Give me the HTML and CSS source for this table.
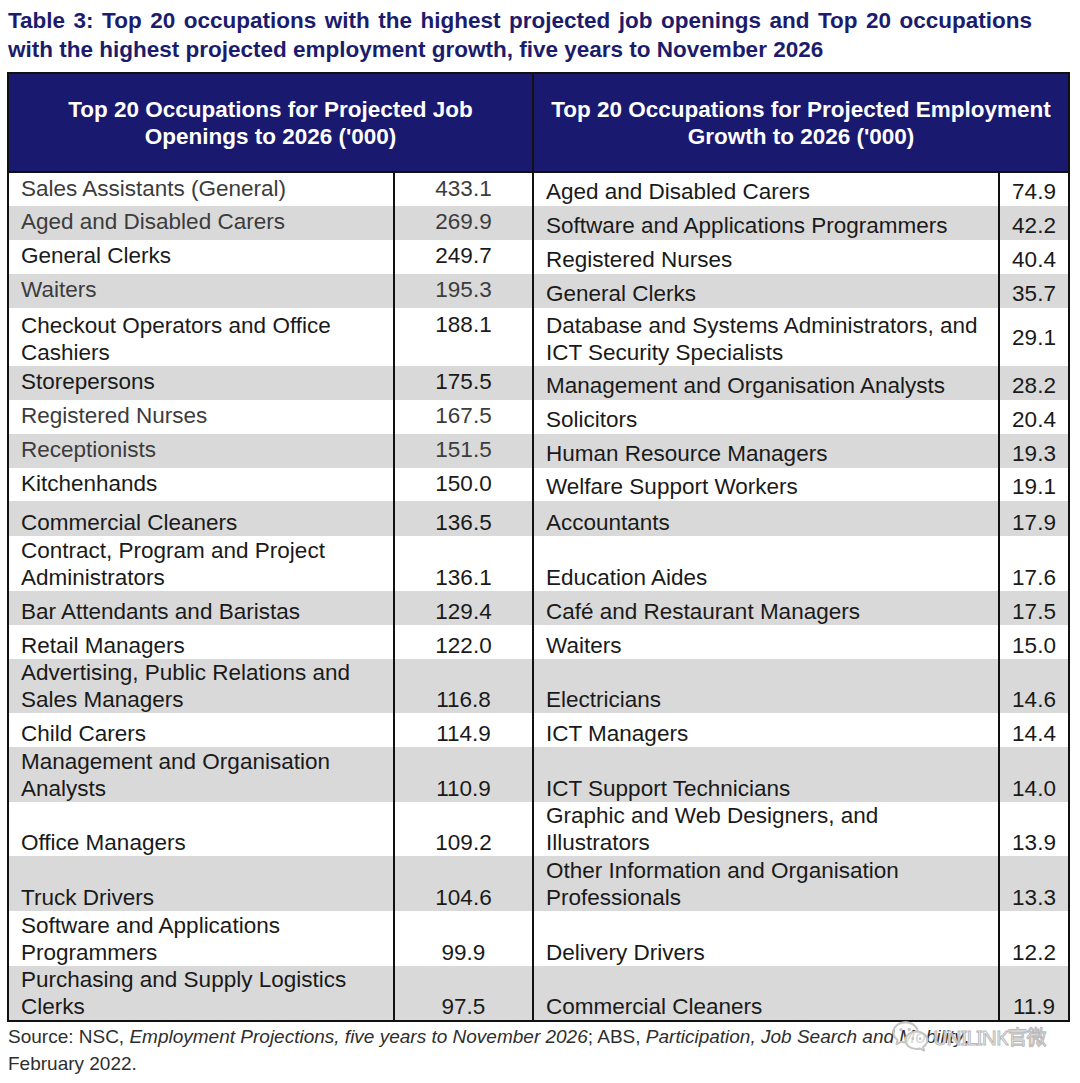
FILE: index.html
```html
<!DOCTYPE html>
<html lang="en">
<head>
<meta charset="utf-8">
<title>Table 3</title>
<link rel="stylesheet" href="styles.css">
</head>
<body>
<div class="page">
  <h1 class="title">Table 3: Top 20 occupations with the highest projected job openings and Top 20 occupations with the highest projected employment growth, five years to November 2026</h1>
  <table class="occ">
    <colgroup>
      <col class="c1"><col class="c2"><col class="c3"><col class="c4">
    </colgroup>
    <thead>
      <tr class="head">
        <th colspan="2">Top 20 Occupations for Projected Job<br>Openings to 2026 ('000)</th>
        <th colspan="2">Top 20 Occupations for Projected Employment<br>Growth to 2026 ('000)</th>
      </tr>
    </thead>
    <tbody>
      <tr class="r34 mid-l"><td class="dim">Sales Assistants (General)</td><td class="v dim">433.1</td><td>Aged and Disabled Carers</td><td class="v">74.9</td></tr>
      <tr class="r34 alt mid-l"><td class="dim">Aged and Disabled Carers</td><td class="v dim">269.9</td><td>Software and Applications Programmers</td><td class="v">42.2</td></tr>
      <tr class="r34 mid-l"><td>General Clerks</td><td class="v">249.7</td><td>Registered Nurses</td><td class="v">40.4</td></tr>
      <tr class="r34 alt mid-l"><td class="dim">Waiters</td><td class="v dim">195.3</td><td>General Clerks</td><td class="v">35.7</td></tr>
      <tr class="r58"><td>Checkout Operators and Office Cashiers</td><td class="v top">188.1</td><td>Database and Systems Administrators, and ICT Security Specialists</td><td class="v middle">29.1</td></tr>
      <tr class="r34 alt mid-l"><td>Storepersons</td><td class="v">175.5</td><td>Management and Organisation Analysts</td><td class="v">28.2</td></tr>
      <tr class="r34 mid-l"><td class="dim">Registered Nurses</td><td class="v dim">167.5</td><td>Solicitors</td><td class="v">20.4</td></tr>
      <tr class="r34 alt mid-l"><td class="dim">Receptionists</td><td class="v dim">151.5</td><td>Human Resource Managers</td><td class="v">19.3</td></tr>
      <tr class="r33 mid-l"><td>Kitchenhands</td><td class="v">150.0</td><td>Welfare Support Workers</td><td class="v">19.1</td></tr>
      <tr class="r35 alt"><td>Commercial Cleaners</td><td class="v">136.5</td><td>Accountants</td><td class="v">17.9</td></tr>
      <tr class="r55"><td>Contract, Program and Project Administrators</td><td class="v">136.1</td><td>Education Aides</td><td class="v">17.6</td></tr>
      <tr class="r34 alt"><td>Bar Attendants and Baristas</td><td class="v">129.4</td><td>Café and Restaurant Managers</td><td class="v">17.5</td></tr>
      <tr class="r34"><td>Retail Managers</td><td class="v">122.0</td><td>Waiters</td><td class="v">15.0</td></tr>
      <tr class="r54 alt"><td>Advertising, Public Relations and Sales Managers</td><td class="v">116.8</td><td>Electricians</td><td class="v">14.6</td></tr>
      <tr class="r34"><td>Child Carers</td><td class="v">114.9</td><td>ICT Managers</td><td class="v">14.4</td></tr>
      <tr class="r55 alt"><td>Management and Organisation Analysts</td><td class="v">110.9</td><td>ICT Support Technicians</td><td class="v">14.0</td></tr>
      <tr class="r54"><td>Office Managers</td><td class="v">109.2</td><td>Graphic and Web Designers, and Illustrators</td><td class="v">13.9</td></tr>
      <tr class="r55 alt"><td>Truck Drivers</td><td class="v">104.6</td><td>Other Information and Organisation Professionals</td><td class="v">13.3</td></tr>
      <tr class="r55"><td>Software and Applications Programmers</td><td class="v">99.9</td><td>Delivery Drivers</td><td class="v">12.2</td></tr>
      <tr class="r54 alt"><td>Purchasing and Supply Logistics Clerks</td><td class="v">97.5</td><td>Commercial Cleaners</td><td class="v">11.9</td></tr>
    </tbody>
  </table>
  <div class="footer-wrap">
    <p class="source">Source: NSC, <em>Employment Projections, five years to November 2026</em>; ABS, <em>Participation, Job Search and Mobility</em>, February 2022.</p>
    <div class="watermark">
      <svg class="wm-icon" width="40" height="34" viewBox="0 0 44 36" aria-hidden="true">
        <path d="M16 3C8.3 3 2.5 8 2.5 14c0 3.4 1.9 6.4 4.8 8.4L6 27l5-2.6c1.5.4 3.2.7 5 .7" fill="none" stroke="#c4c4c4" stroke-width="2.2" stroke-linecap="round" stroke-linejoin="round"/>
        <path d="M16 3c7.4 0 13.3 4.7 13.5 10.6" fill="none" stroke="#c4c4c4" stroke-width="2.2" stroke-linecap="round"/>
        <path d="M28 13c-6.6 0-12 4.3-12 9.7s5.4 9.7 12 9.7c1.4 0 2.8-.2 4-.6l4.4 2.3-1.1-3.9c2.6-1.8 4.7-4.5 4.7-7.5 0-5.4-5.4-9.7-12-9.7z" fill="rgba(255,255,255,0.8)" stroke="#c4c4c4" stroke-width="2.2" stroke-linejoin="round"/>
        <circle cx="11" cy="11" r="1.8" fill="#c4c4c4"/>
        <circle cx="20" cy="11" r="1.8" fill="#c4c4c4"/>
        <circle cx="24" cy="21" r="1.5" fill="#c4c4c4"/>
        <circle cx="32" cy="21" r="1.5" fill="#c4c4c4"/>
      </svg>
      <span class="wm-text">UNILINK官微</span>
    </div>
  </div>
</div>
</body>
</html>
```
FILE: styles.css
```css
html, body {
  margin: 0;
  padding: 0;
  background: #ffffff;
}

.page {
  width: 1066px;
  padding: 6px 0 0 7px;
  font-family: "Liberation Sans", Arial, sans-serif;
}

.title {
  margin: 0 0 0 1px;
  width: 1024px;
  font-size: 22.5px;
  line-height: 29px;
  font-weight: bold;
  color: #1c1c6c;
  text-align: justify;
}

.occ {
  margin-top: 8px;
  width: 1061px;
  border-collapse: collapse;
  table-layout: fixed;
  border: 2px solid #111;
  font-size: 22.5px;
  color: #1a1a1a;
}

.c1 { width: 386px; }
.c2 { width: 139px; }
.c3 { width: 466px; }
.c4 { width: 70px; }

.head th {
  background: #191970;
  color: #ffffff;
  font-weight: bold;
  font-size: 22.5px;
  line-height: 27px;
  height: 97px;
  padding: 0;
  text-align: center;
  vertical-align: middle;
  border: 2px solid #111;
}

.occ td {
  padding: 0 8px 0 12px;
  line-height: 27px;
  vertical-align: bottom;
  border-left: 2px solid #111;
  border-right: 2px solid #111;
}

.occ td:nth-child(3) {
  padding-right: 20px;
}

.occ td.v {
  text-align: center;
  padding: 0;
}

.occ td.top { vertical-align: top; padding-top: 3px; }
.occ td.middle { vertical-align: middle; }

.mid-l td:nth-child(1),
.mid-l td:nth-child(2) {
  vertical-align: middle;
  padding-bottom: 3px;
}

.mid-l td:nth-child(3),
.mid-l td:nth-child(4) {
  padding-bottom: 1px;
}

.alt td { background: #d9d9d9; }

.dim { color: #3c3c3c; }

.r33 { height: 33px; }
.r34 { height: 34px; }
.r35 { height: 35px; }
.r54 { height: 54px; }
.r55 { height: 55px; }
.r58 { height: 58px; }

.footer-wrap {
  position: relative;
  width: 1066px;
}

.source {
  margin: 1px 0 0 1px;
  width: 1000px;
  font-size: 19px;
  line-height: 27px;
  color: #2e2e2e;
}

.watermark {
  position: absolute;
  left: 884px;
  top: -4px;
  display: flex;
  align-items: center;
  gap: 2px;
}

.wm-text {
  font-family: "Noto Sans", "Noto Sans CJK SC", sans-serif;
  font-size: 20px;
  letter-spacing: -1px;
  color: rgba(255, 255, 255, 0.7);
  -webkit-text-stroke: 1px #b8b8b8;
}
```
